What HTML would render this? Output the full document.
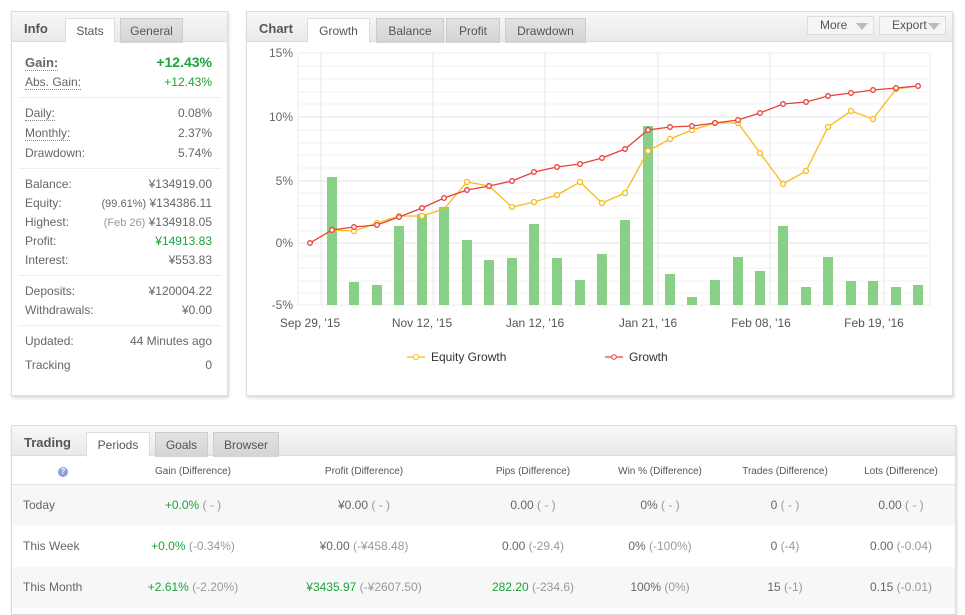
<!DOCTYPE html><html><head><meta charset="utf-8"><style>
*{margin:0;padding:0;box-sizing:border-box}
body{width:965px;height:607px;background:#fff;font-family:"Liberation Sans","DejaVu Sans",sans-serif;font-size:12px;color:#666;position:relative;overflow:hidden}
.p{position:absolute;border:1px solid #ddd;background:#fff;box-shadow:1px 2px 3px rgba(0,0,0,.15)}
.hd{position:absolute;left:0;right:0;top:0;height:30px;background:linear-gradient(#f8f8f8,#e9e9e9);border-bottom:1px solid #ddd}
.t{position:absolute;font-weight:bold;font-size:13px;color:#555;top:9px}
.tab{position:absolute;top:6px;height:25px;border:1px solid #ccc;border-bottom:none;background:linear-gradient(#e2e2e2,#d4d4d4);text-align:center;line-height:24px;color:#555}
.tab.a{background:#fff;height:25px;border-color:#ddd}
.ab{position:absolute}
.r{position:absolute;right:15px;text-align:right}
.l{position:absolute;left:13px}
.dl{border-bottom:1px dotted #888}
.sep{position:absolute;left:6px;right:6px;height:1px;background:#eee}
.g{color:#1aa43b}.gr{color:#999}
.btn{position:absolute;top:4px;height:19px;border:1px solid #ddd;background:#f5f5f5;line-height:17px;padding-left:12px;color:#555}
.btn i{position:absolute;right:5px;top:6px;width:0;height:0;border-left:6px solid transparent;border-right:6px solid transparent;border-top:7px solid #bbb}
.row{position:absolute;left:0;right:0;height:41px;line-height:41px}
.c{position:absolute;text-align:center;transform:translateX(-50%);white-space:nowrap}
</style></head><body>
<div class="p" style="left:11px;top:11px;width:217px;height:385px">
<div class="hd"></div>
<div class="t" style="left:12px">Info</div>
<div class="tab a" style="left:53px;width:50px">Stats</div>
<div class="tab" style="left:108px;width:63px">General</div>
<div class="l dl" style="top:43px;font-weight:bold;font-size:13px;color:#666">Gain:</div><div class="r g" style="top:42px;font-weight:bold;font-size:14px">+12.43%</div>
<div class="l dl" style="top:63px">Abs. Gain:</div><div class="r g" style="top:63px">+12.43%</div>
<div class="sep" style="top:85px"></div>
<div class="l dl" style="top:94px">Daily:</div><div class="r" style="top:94px">0.08%</div>
<div class="l dl" style="top:114px">Monthly:</div><div class="r" style="top:114px">2.37%</div>
<div class="l" style="top:134px">Drawdown:</div><div class="r" style="top:134px">5.74%</div>
<div class="sep" style="top:156px"></div>
<div class="l" style="top:165px">Balance:</div><div class="r" style="top:165px">¥134919.00</div>
<div class="l" style="top:184px">Equity:</div><div class="r" style="top:184px"><span style="font-size:11px">(99.61%)</span> ¥134386.11</div>
<div class="l" style="top:203px">Highest:</div><div class="r" style="top:203px"><span class="gr" style="font-size:11px">(Feb 26)</span> ¥134918.05</div>
<div class="l" style="top:222px">Profit:</div><div class="r g" style="top:222px">¥14913.83</div>
<div class="l" style="top:241px">Interest:</div><div class="r" style="top:241px">¥553.83</div>
<div class="sep" style="top:263px"></div>
<div class="l" style="top:272px">Deposits:</div><div class="r" style="top:272px">¥120004.22</div>
<div class="l" style="top:291px">Withdrawals:</div><div class="r" style="top:291px">¥0.00</div>
<div class="sep" style="top:313px"></div>
<div class="l" style="top:322px">Updated:</div><div class="r" style="top:322px">44 Minutes ago</div>
<div class="l" style="top:346px">Tracking</div><div class="r" style="top:346px">0</div>
</div>
<div class="p" style="left:246px;top:11px;width:707px;height:385px">
<div class="hd"></div>
<div class="t" style="left:12px">Chart</div>
<div class="tab a" style="left:60px;width:63px">Growth</div>
<div class="tab" style="left:129px;width:68px">Balance</div>
<div class="tab" style="left:199px;width:54px">Profit</div>
<div class="tab" style="left:258px;width:81px">Drawdown</div>
<div class="btn" style="left:560px;width:67px">More<i></i></div>
<div class="btn" style="left:632px;width:67px">Export<i></i></div>
</div>
<svg style="position:absolute;left:0;top:0" width="965" height="400" font-family="Liberation Sans,sans-serif" font-size="12">
<rect x="298" y="53" width="632" height="252" fill="#fff" stroke="#eee"/>
<g stroke="#f0f0f0"><line x1="298" x2="930" y1="66" y2="66"/><line x1="298" x2="930" y1="79" y2="79"/><line x1="298" x2="930" y1="92" y2="92"/><line x1="298" x2="930" y1="104" y2="104"/><line x1="298" x2="930" y1="130" y2="130"/><line x1="298" x2="930" y1="143" y2="143"/><line x1="298" x2="930" y1="155" y2="155"/><line x1="298" x2="930" y1="168" y2="168"/><line x1="298" x2="930" y1="193" y2="193"/><line x1="298" x2="930" y1="206" y2="206"/><line x1="298" x2="930" y1="218" y2="218"/><line x1="298" x2="930" y1="231" y2="231"/><line x1="298" x2="930" y1="256" y2="256"/><line x1="298" x2="930" y1="268" y2="268"/><line x1="298" x2="930" y1="281" y2="281"/><line x1="298" x2="930" y1="293" y2="293"/></g>
<g stroke="#e6e6e6"><line x1="298" x2="930" y1="117" y2="117"/><line x1="298" x2="930" y1="181" y2="181"/><line x1="298" x2="930" y1="243" y2="243"/><line x1="321" x2="321" y1="53" y2="305"/><line x1="433" x2="433" y1="53" y2="305"/><line x1="545" x2="545" y1="53" y2="305"/><line x1="658" x2="658" y1="53" y2="305"/><line x1="770" x2="770" y1="53" y2="305"/><line x1="884" x2="884" y1="53" y2="305"/></g>
<g fill="#666" text-anchor="end"><text x="293" y="57">15%</text><text x="293" y="121">10%</text><text x="293" y="185">5%</text><text x="293" y="247">0%</text><text x="293" y="309">-5%</text></g>
<g fill="#555" text-anchor="middle"><text x="310" y="327">Sep 29, '15</text><text x="422" y="327">Nov 12, '15</text><text x="535" y="327">Jan 12, '16</text><text x="648" y="327">Jan 21, '16</text><text x="761" y="327">Feb 08, '16</text><text x="874" y="327">Feb 19, '16</text></g>
<g fill="#88cf88">
<rect x="327" y="177" width="10" height="128"/><rect x="349" y="282" width="10" height="23"/><rect x="372" y="285" width="10" height="20"/><rect x="394" y="226" width="10" height="79"/><rect x="417" y="214" width="10" height="91"/><rect x="439" y="207" width="10" height="98"/><rect x="462" y="240" width="10" height="65"/><rect x="484" y="260" width="10" height="45"/><rect x="507" y="258" width="10" height="47"/><rect x="529" y="224" width="10" height="81"/><rect x="552" y="258" width="10" height="47"/><rect x="575" y="280" width="10" height="25"/><rect x="597" y="254" width="10" height="51"/><rect x="620" y="220" width="10" height="85"/><rect x="643" y="126" width="10" height="179"/><rect x="665" y="274" width="10" height="31"/><rect x="687" y="297" width="10" height="8"/><rect x="710" y="280" width="10" height="25"/><rect x="733" y="257" width="10" height="48"/><rect x="755" y="271" width="10" height="34"/><rect x="778" y="226" width="10" height="79"/><rect x="801" y="287" width="10" height="18"/><rect x="823" y="257" width="10" height="48"/><rect x="846" y="281" width="10" height="24"/><rect x="868" y="281" width="10" height="24"/><rect x="891" y="287" width="10" height="18"/><rect x="913" y="285" width="10" height="20"/></g>
<polyline fill="none" stroke="#f8bb1c" stroke-width="1.3" points="310,243 332,230 354,231 377,223 399,216 422,216 444,209 467,182 489,186 512,207 534,202 557,195 580,182 602,203 625,193 648,151 670,139 692,130 715,123 738,123 760,153 783,184 806,171 828,127 851,111 873,119 896,89 918,86"/>
<g fill="#fff" stroke="#f8bb1c" stroke-width="1.3"><circle cx="332" cy="230" r="2.5"/><circle cx="354" cy="231" r="2.5"/><circle cx="377" cy="223" r="2.5"/><circle cx="399" cy="216" r="2.5"/><circle cx="422" cy="216" r="2.5"/><circle cx="467" cy="182" r="2.5"/><circle cx="489" cy="186" r="2.5"/><circle cx="512" cy="207" r="2.5"/><circle cx="534" cy="202" r="2.5"/><circle cx="557" cy="195" r="2.5"/><circle cx="580" cy="182" r="2.5"/><circle cx="602" cy="203" r="2.5"/><circle cx="625" cy="193" r="2.5"/><circle cx="648" cy="151" r="2.5"/><circle cx="670" cy="139" r="2.5"/><circle cx="692" cy="130" r="2.5"/><circle cx="715" cy="123" r="2.5"/><circle cx="738" cy="123" r="2.5"/><circle cx="760" cy="153" r="2.5"/><circle cx="783" cy="184" r="2.5"/><circle cx="806" cy="171" r="2.5"/><circle cx="828" cy="127" r="2.5"/><circle cx="851" cy="111" r="2.5"/><circle cx="873" cy="119" r="2.5"/><circle cx="896" cy="89" r="2.5"/></g>
<polyline fill="none" stroke="#e8403a" stroke-width="1.3" points="310,243 332,230 354,227 377,225 399,217 422,208 444,198 467,190 489,186 512,181 534,172 557,167 580,164 602,158 625,149 648,130 670,127 692,126 715,123 738,120 760,113 783,104 806,102 828,96 851,93 873,90 896,88 918,86"/>
<g fill="#fff" stroke="#e8403a" stroke-width="1.3"><circle cx="310" cy="243" r="2.3"/><circle cx="332" cy="230" r="2.3"/><circle cx="354" cy="227" r="2.3"/><circle cx="377" cy="225" r="2.3"/><circle cx="399" cy="217" r="2.3"/><circle cx="422" cy="208" r="2.3"/><circle cx="444" cy="198" r="2.3"/><circle cx="467" cy="190" r="2.3"/><circle cx="489" cy="186" r="2.3"/><circle cx="512" cy="181" r="2.3"/><circle cx="534" cy="172" r="2.3"/><circle cx="557" cy="167" r="2.3"/><circle cx="580" cy="164" r="2.3"/><circle cx="602" cy="158" r="2.3"/><circle cx="625" cy="149" r="2.3"/><circle cx="648" cy="130" r="2.3"/><circle cx="670" cy="127" r="2.3"/><circle cx="692" cy="126" r="2.3"/><circle cx="715" cy="123" r="2.3"/><circle cx="738" cy="120" r="2.3"/><circle cx="760" cy="113" r="2.3"/><circle cx="783" cy="104" r="2.3"/><circle cx="806" cy="102" r="2.3"/><circle cx="828" cy="96" r="2.3"/><circle cx="851" cy="93" r="2.3"/><circle cx="873" cy="90" r="2.3"/><circle cx="896" cy="88" r="2.3"/><circle cx="918" cy="86" r="2.3"/></g>
<line x1="407" x2="425" y1="357" y2="357" stroke="#f8bb1c" stroke-width="1.3"/><circle cx="416" cy="357" r="2.5" fill="#fff" stroke="#f8bb1c"/><text x="431" y="361" fill="#333">Equity Growth</text>
<line x1="605" x2="623" y1="357" y2="357" stroke="#e8403a" stroke-width="1.3"/><circle cx="614" cy="357" r="2.3" fill="#fff" stroke="#e8403a"/><text x="629" y="361" fill="#333">Growth</text>
</svg>
<div class="p" style="left:11px;top:425px;width:945px;height:190px">
<div class="hd"></div>
<div class="t" style="left:12px">Trading</div>
<div class="tab a" style="left:74px;width:64px">Periods</div>
<div class="tab" style="left:143px;width:53px">Goals</div>
<div class="tab" style="left:201px;width:66px">Browser</div>
<div class="ab" style="left:0;right:0;top:31px;height:28px;border-bottom:1px solid #e2e2e2;font-size:10px;color:#555;line-height:30px">
<span class="c" style="left:51px"><span style="display:inline-block;width:10px;height:10px;border-radius:50%;background:#8c9fe0;color:#fff;font-size:8px;line-height:10px;font-weight:bold">?</span></span>
<span class="c" style="left:181px">Gain (Difference)</span><span class="c" style="left:352px">Profit (Difference)</span><span class="c" style="left:521px">Pips (Difference)</span><span class="c" style="left:648px">Win % (Difference)</span><span class="c" style="left:773px">Trades (Difference)</span><span class="c" style="left:889px">Lots (Difference)</span></div>
<div class="row" style="top:59px;background:#f7f7f7"><span class="ab" style="left:11px">Today</span><span class="c" style="left:181px"><span class="g">+0.0%</span> <span class="gr">( - )</span></span><span class="c" style="left:352px">¥0.00 <span class="gr">( - )</span></span><span class="c" style="left:521px">0.00 <span class="gr">( - )</span></span><span class="c" style="left:648px">0% <span class="gr">( - )</span></span><span class="c" style="left:773px">0 <span class="gr">( - )</span></span><span class="c" style="left:889px">0.00 <span class="gr">( - )</span></span></div>
<div class="row" style="top:100px"><span class="ab" style="left:11px">This Week</span><span class="c" style="left:181px"><span class="g">+0.0%</span> <span class="gr">(-0.34%)</span></span><span class="c" style="left:352px">¥0.00 <span class="gr">(-¥458.48)</span></span><span class="c" style="left:521px">0.00 <span class="gr">(-29.4)</span></span><span class="c" style="left:648px">0% <span class="gr">(-100%)</span></span><span class="c" style="left:773px">0 <span class="gr">(-4)</span></span><span class="c" style="left:889px">0.00 <span class="gr">(-0.04)</span></span></div>
<div class="row" style="top:141px;background:#f7f7f7"><span class="ab" style="left:11px">This Month</span><span class="c" style="left:181px"><span class="g">+2.61%</span> <span class="gr">(-2.20%)</span></span><span class="c" style="left:352px"><span class="g">¥3435.97</span> <span class="gr">(-¥2607.50)</span></span><span class="c" style="left:521px"><span class="g">282.20</span> <span class="gr">(-234.6)</span></span><span class="c" style="left:648px">100% <span class="gr">(0%)</span></span><span class="c" style="left:773px">15 <span class="gr">(-1)</span></span><span class="c" style="left:889px">0.15 <span class="gr">(-0.01)</span></span></div>
</div>
</body></html>
